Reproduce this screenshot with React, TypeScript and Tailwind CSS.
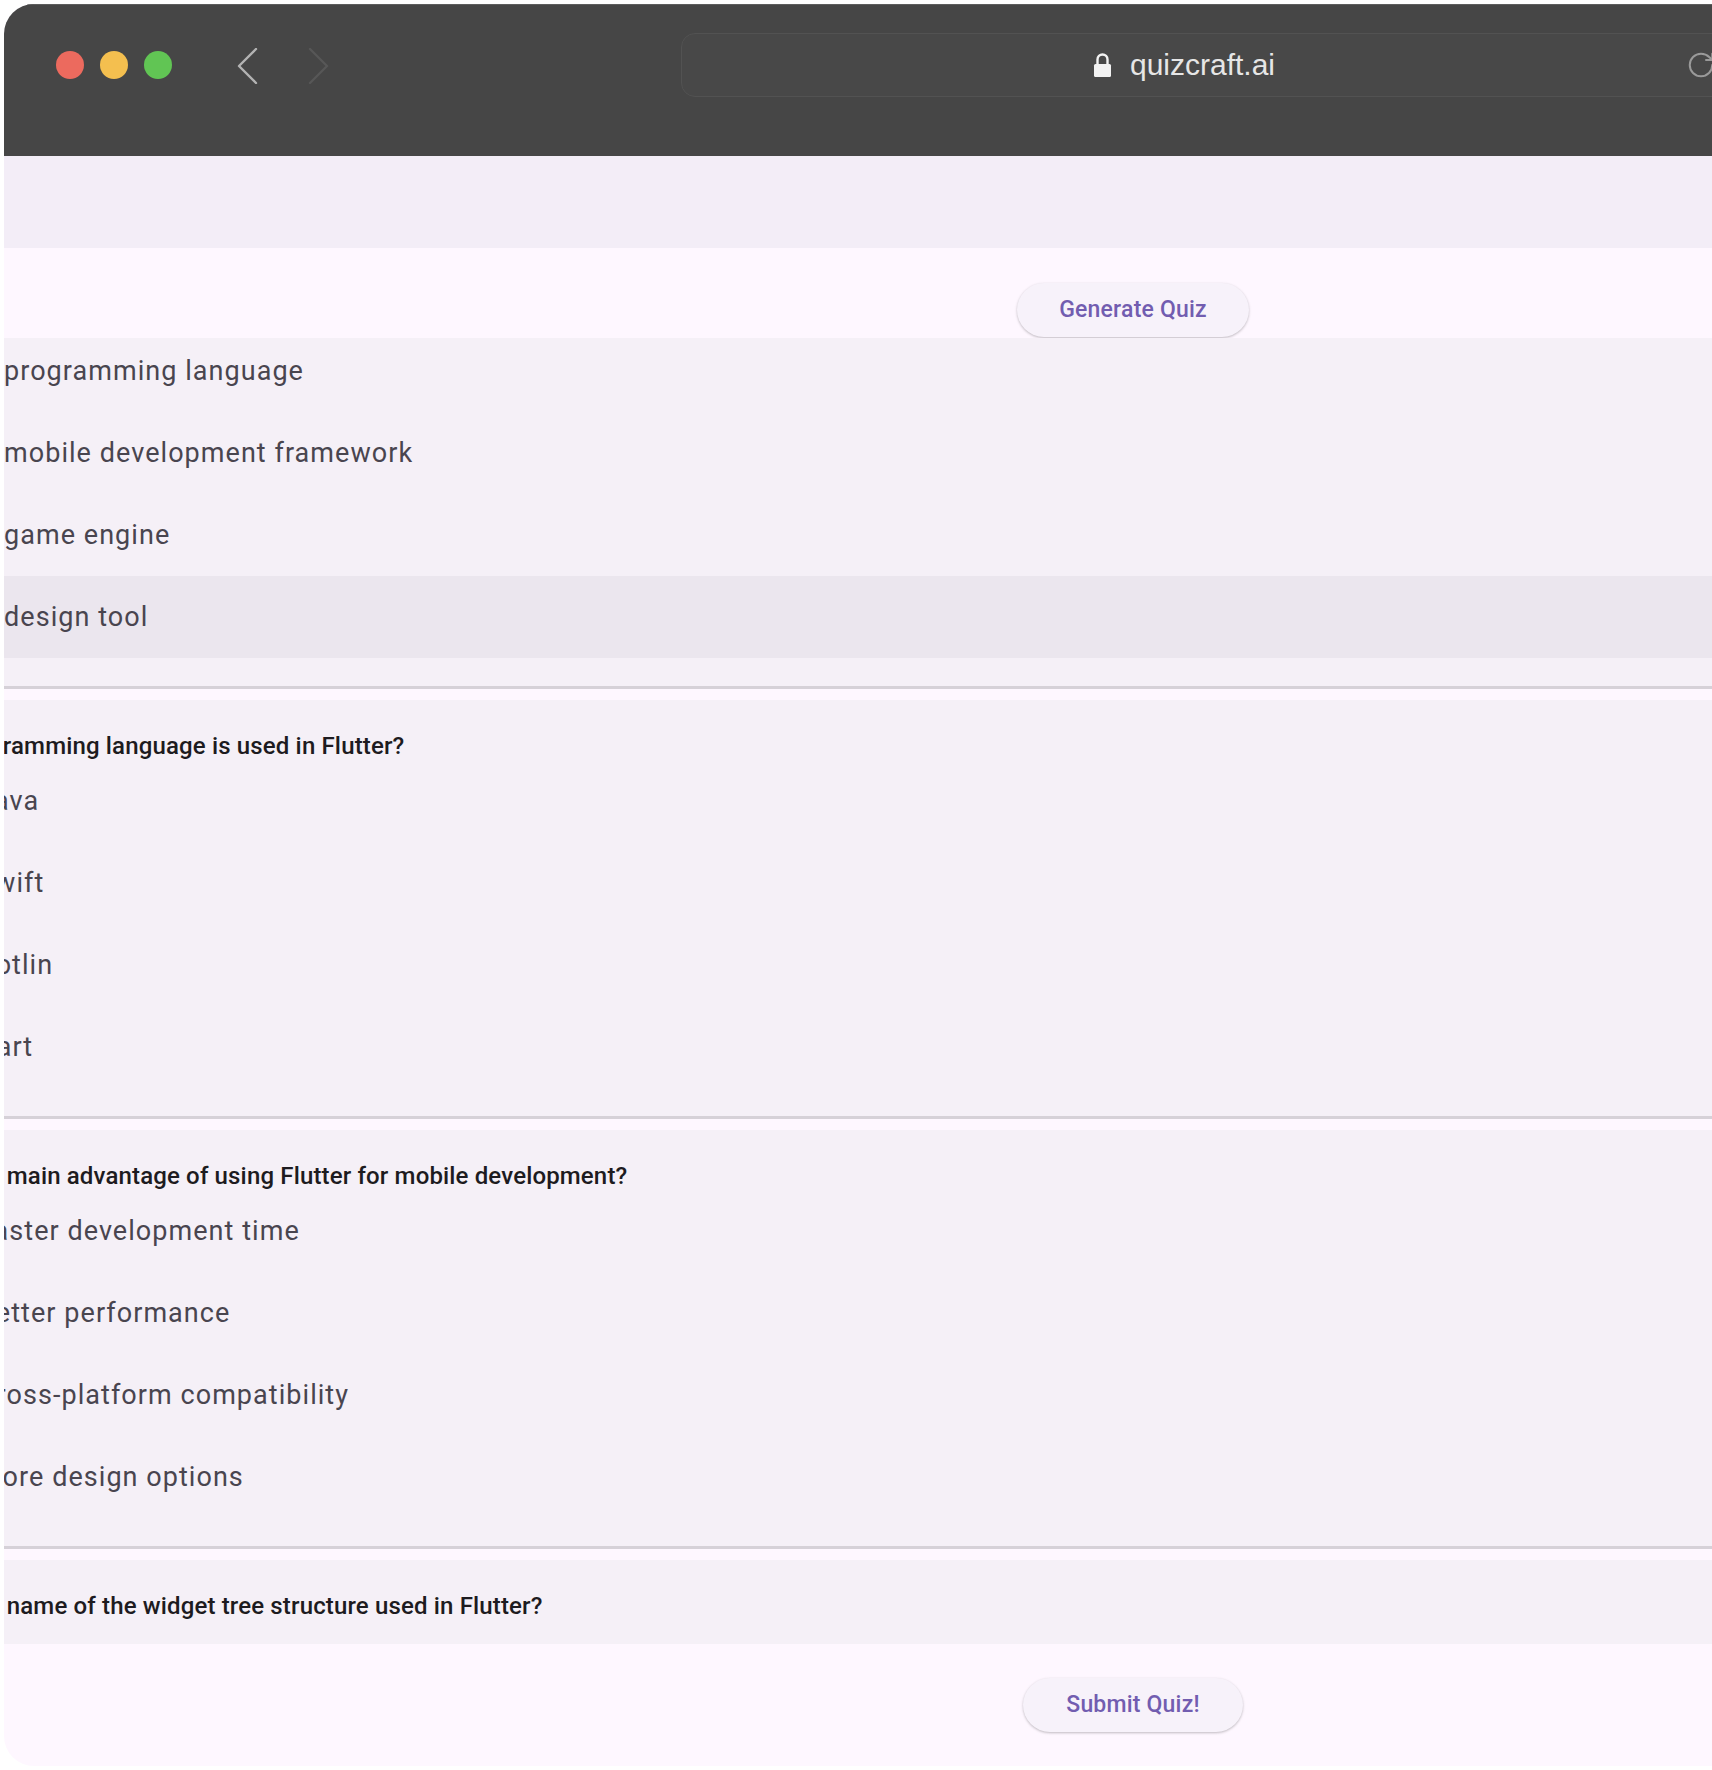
import { RotateCw } from "lucide-react";

type Question = {
  title?: string;
  titleShift?: string;
  optionShift: string;
  options: string[];
  selected?: number;
};

const questions: Question[] = [
  {
    optionShift: "ml-0",
    options: ["programming language", "mobile development framework", "game engine", "design tool"],
    selected: 3,
  },
  {
    title: "Which programming language is used in Flutter?",
    titleShift: "-ml-[124px]",
    optionShift: "-ml-[26px]",
    options: ["Java", "Swift", "Kotlin", "Dart"],
  },
  {
    title: "What is the main advantage of using Flutter for mobile development?",
    titleShift: "-ml-[125px]",
    optionShift: "-ml-[26px]",
    options: ["Faster development time", "Better performance", "Cross-platform compatibility", "More design options"],
  },
  {
    title: "What is the name of the widget tree structure used in Flutter?",
    titleShift: "-ml-[125px]",
    optionShift: "-ml-[26px]",
    options: [],
  },
];

const TitleBar = () => (
  <div className="flex h-[152px] shrink-0 items-start border-t border-[#5d5d5d] bg-[#464646] pl-[52px]">
    {/* traffic lights */}
    <div className="mt-[46px] flex gap-[16px]">
      <span className="h-[28px] w-[28px] rounded-full bg-[#ec6a5e]" />
      <span className="h-[28px] w-[28px] rounded-full bg-[#f4bf4f]" />
      <span className="h-[28px] w-[28px] rounded-full bg-[#61c554]" />
    </div>

    {/* back / forward */}
    <svg className="ml-[65px] mt-[43px] shrink-0" width="22" height="36" viewBox="0 0 22 36" fill="none">
      <polyline points="19,1 2,18 19,35" stroke="#b3b3b3" strokeWidth="2.4" strokeLinecap="round" strokeLinejoin="round" />
    </svg>
    <svg className="ml-[48px] mt-[43px] shrink-0" width="22" height="36" viewBox="0 0 22 36" fill="none">
      <polyline points="3,1 20,18 3,35" stroke="#575757" strokeWidth="2.4" strokeLinecap="round" strokeLinejoin="round" />
    </svg>

    {/* address bar */}
    <div className="ml-[352px] mt-[28px] flex h-[64px] w-[1100px] shrink-0 items-center rounded-[14px] border border-[#525252] bg-[#484848]">
      <div className="flex w-[1004px] items-center justify-center gap-[18px]">
        <svg width="19" height="26" viewBox="0 0 19 26" fill="none">
          <path d="M4.5 12V7.5a5 5 0 0 1 10 0V12" stroke="#f2f2f2" strokeWidth="2.4" />
          <rect x="1" y="12" width="17" height="13" rx="1.5" fill="#f2f2f2" />
        </svg>
        <span className="font-['Liberation_Sans',Arial,sans-serif] text-[30px] leading-none text-[#e6e6e6]">
          quizcraft.ai
        </span>
      </div>
      <RotateCw className="h-[30px] w-[30px] shrink-0 text-[#9a9a9a]" strokeWidth={1.6} />
    </div>
  </div>
);

const QuizButton = ({ label, width }: { label: string; width: string }) => (
  <button
    className={`${width} h-[54px] rounded-full bg-[#f7f2fa] text-[23px] font-medium tracking-[0.2px] text-[#725db0] shadow-[0_1px_3px_rgba(0,0,0,0.18),0_1px_2px_rgba(0,0,0,0.08)]`}
  >
    {label}
  </button>
);

const QuestionCard = ({ q }: { q: Question }) => {
  const open = q.options.length === 0;
  return (
    <section>
      <div className="bg-[#f5f0f7]">
        {q.title && (
          <div className="h-[60px] pt-[32px]">
            <p className={`${q.titleShift} whitespace-nowrap text-[24px] font-medium leading-[28px] tracking-[0.15px] text-[#1d1b20]`}>
              {q.title}
            </p>
          </div>
        )}
        {q.options.map((opt, i) => (
          <div key={opt} className={`flex h-[82px] items-center ${q.selected === i ? "bg-[#ebe6ee]" : ""}`}>
            <span className={`${q.optionShift} whitespace-nowrap text-[27px] tracking-[1.05px] text-[#49454f]`}>{opt}</span>
          </div>
        ))}
        <div className={open ? "h-[120px]" : "h-[28px]"} />
      </div>
      {!open && (
        <>
          <div className="h-[3px] bg-[#d6d1d8]" />
          <div className="h-[11px] bg-[#fef7ff]" />
        </>
      )}
    </section>
  );
};

export default function App() {
  return (
    <div className="h-[1770px] w-full overflow-hidden bg-white font-['Roboto',sans-serif]">
      <div className="ml-[4px] mt-[4px] flex h-[1762px] w-[1708px] flex-col overflow-hidden rounded-l-[30px] bg-[#fef7ff]">
        <TitleBar />

        {/* app bar */}
        <div className="h-[92px] shrink-0 bg-[#f3edf7]" />

        {/* generate */}
        <div className="h-[90px] shrink-0 pl-[1013px] pt-[35px]">
          <QuizButton label="Generate Quiz" width="w-[232px]" />
        </div>

        {/* questions */}
        <div className="h-[1306px] shrink-0 overflow-hidden">
          <div className="-mt-[8px]">
            {questions.map((q, i) => (
              <QuestionCard key={i} q={q} />
            ))}
          </div>
        </div>

        {/* submit */}
        <div className="h-[122px] shrink-0 pl-[1019px] pt-[34px]">
          <QuizButton label="Submit Quiz!" width="w-[220px]" />
        </div>
      </div>
    </div>
  );
}
